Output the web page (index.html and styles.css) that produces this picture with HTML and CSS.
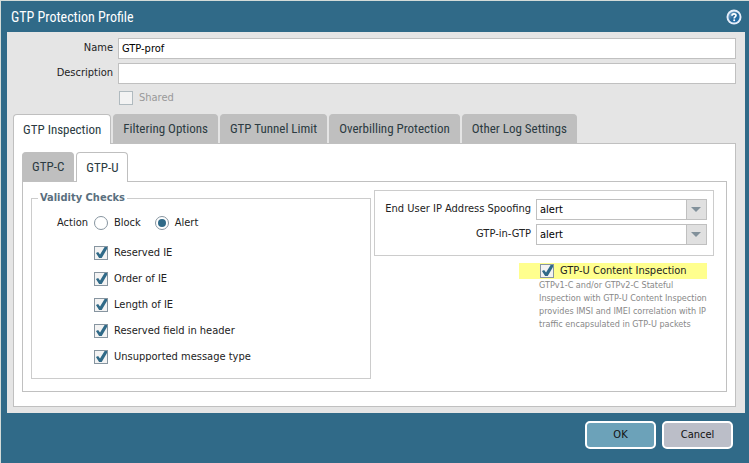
FILE: index.html
```html
<!DOCTYPE html>
<html lang="en">
<head>
  <meta charset="UTF-8" />
  <title>GTP Protection Profile</title>
  <meta name="viewport" content="width=device-width, initial-scale=1.0" />
  <link rel="stylesheet" href="styles.css">
</head>
<body>
  <form class="dialog">
    <header class="dialog-header">
      <h1>GTP Protection Profile</h1>
      <button type="button" class="help" aria-label="Help">
        <svg width="16" height="16" viewBox="0 0 16 16">
          <defs>
            <linearGradient id="help-fill" x1="0" y1="0" x2="1" y2="1">
              <stop offset="0" stop-color="#8fb8d8" />
              <stop offset="0.5" stop-color="#2a6a9c" />
              <stop offset="1" stop-color="#1c6fae" />
            </linearGradient>
          </defs>
          <circle cx="8" cy="8" r="7.5" fill="#e6eefa" />
          <circle cx="8" cy="8" r="5.6" fill="url(#help-fill)" />
          <path d="M6 6.7C6 4.4 10 4.4 10 6.5C10 8 8.2 7.8 8.2 9.4" fill="none" stroke="#fff" stroke-width="1.7" />
          <circle cx="8.2" cy="11.3" r="1" fill="#fff" />
        </svg>
      </button>
    </header>

    <main class="dialog-body">
      <div class="field">
        <label for="name">Name</label>
        <input type="text" id="name" class="text" value="GTP-prof" />
      </div>
      <div class="field">
        <label for="description">Description</label>
        <input type="text" id="description" class="text" />
      </div>
      <div class="shared">
        <label class="check"><input type="checkbox" disabled /> Shared</label>
      </div>

      <div class="tabs" role="tablist">
        <button type="button" class="tab active" role="tab" aria-selected="true">GTP Inspection</button>
        <button type="button" class="tab" role="tab">Filtering Options</button>
        <button type="button" class="tab" role="tab">GTP Tunnel Limit</button>
        <button type="button" class="tab" role="tab">Overbilling Protection</button>
        <button type="button" class="tab" role="tab">Other Log Settings</button>
      </div>

      <div class="panel">
        <div class="tabs" role="tablist">
          <button type="button" class="tab" role="tab">GTP-C</button>
          <button type="button" class="tab active" role="tab" aria-selected="true">GTP-U</button>
        </div>

        <div class="panel columns">
          <fieldset class="validity">
            <legend>Validity Checks</legend>
            <div class="action">
              <span class="action-label">Action</span>
              <label class="check"><input type="radio" name="action" /> Block</label>
              <label class="check"><input type="radio" name="action" checked /> Alert</label>
            </div>
            <div class="checks">
              <label class="check"><input type="checkbox" checked /> Reserved IE</label>
              <label class="check"><input type="checkbox" checked /> Order of IE</label>
              <label class="check"><input type="checkbox" checked /> Length of IE</label>
              <label class="check"><input type="checkbox" checked /> Reserved field in header</label>
              <label class="check"><input type="checkbox" checked /> Unsupported message type</label>
            </div>
          </fieldset>

          <div class="side">
            <div class="box">
              <div class="combo-row">
                <label for="spoofing">End User IP Address Spoofing</label>
                <div class="combo">
                  <select id="spoofing"><option>alert</option><option>block</option></select>
                </div>
              </div>
              <div class="combo-row">
                <label for="gtp-in-gtp">GTP-in-GTP</label>
                <div class="combo">
                  <select id="gtp-in-gtp"><option>alert</option><option>block</option></select>
                </div>
              </div>
            </div>
            <div class="inspection">
              <label class="check highlight"><input type="checkbox" checked /> GTP-U Content Inspection</label>
              <p class="hint">GTPv1-C and/or GTPv2-C Stateful Inspection with GTP-U Content Inspection provides IMSI and IMEI correlation with IP traffic encapsulated in GTP-U packets</p>
            </div>
          </div>
        </div>
      </div>
    </main>

    <footer class="dialog-footer">
      <button type="button" class="btn ok">OK</button>
      <button type="button" class="btn">Cancel</button>
    </footer>
  </form>
</body>
</html>
```
FILE: styles.css
```css
:root {
  --blue: #306a88;
  --gray: #e5e5e5;
  --tab: #bfbfbf;
  --line: #c0c0c0;
  --text: #222;
  --ui: "DejaVu Sans Condensed", "Noto Sans", sans-serif;
  --narrow: "Roboto Condensed", "Liberation Sans Narrow", "Liberation Sans", sans-serif;
}

* {
  box-sizing: border-box;
  margin: 0;
  padding: 0;
}

body {
  background: #d3dbd8;
  padding: 1px 0 0 1px;
  font: 11px/16px var(--ui);
  color: var(--text);
}

button, input, select {
  font: inherit;
  color: inherit;
}

.dialog {
  min-height: calc(100vh - 1px);
  background: var(--blue);
  padding: 0 4px 0 6px;
}

.dialog-header {
  height: 31px;
  display: flex;
  align-items: center;
  justify-content: space-between;
  padding: 0 3px 0 4px;
}

.dialog-header h1 {
  font: 14px/20px var(--narrow);
  color: #fff;
}

.help {
  display: flex;
  border: 0;
  background: none;
}

.dialog-body {
  background: var(--gray);
  padding: 6px 9px 6px 6px;
}

.field {
  display: flex;
  margin-bottom: 4px;
}

.field label {
  width: 100px;
  margin-right: 5px;
  line-height: 20px;
  text-align: right;
}

.text {
  flex: 1;
  height: 21px;
  border: 1px solid var(--line);
  background: #fff;
  padding: 0 3px;
  color: #000;
}

.shared {
  margin: 6px 0 8px 106px;
  color: #999;
}

.check {
  display: flex;
  align-items: center;
  gap: 6px;
}

.check input {
  appearance: none;
  width: 14px;
  height: 14px;
  border: 1px solid #8795a0;
  background: #f3f3f3;
}

.check input:disabled {
  border-color: #b0babf;
}

.check input[type="radio"] {
  border-radius: 50%;
  background: #fff;
  padding: 2px;
}

.check input:checked::before {
  content: "";
  display: block;
  width: 12px;
  height: 12px;
  background: var(--blue);
  clip-path: polygon(8% 50%, 26% 42%, 42% 62%, 80% 0, 100% 0, 100% 16%, 56% 92%, 34% 92%);
}

.check input[type="radio"]:checked::before {
  width: 8px;
  height: 8px;
  border-radius: 50%;
  clip-path: none;
}

.tabs {
  display: flex;
  gap: 2px;
}

.tab {
  height: 29px;
  padding: 0 9px;
  border: 1px solid var(--tab);
  border-bottom: 0;
  border-radius: 4px 4px 0 0;
  background: var(--tab);
  font: 13px/20px var(--narrow);
  color: #2c3b42;
}

.tab.active {
  background: #fff;
  height: 30px;
  margin-bottom: -1px;
  z-index: 1;
}

.panel {
  background: #fff;
  border: 1px solid var(--line);
  padding: 8px 8px 14px;
}

.columns {
  display: grid;
  grid-template-columns: 1fr 1fr;
  gap: 3px;
  padding: 8px 12px 12px 8px;
}

.validity {
  min-width: 0;
  border: 1px solid #ccc;
  padding: 0 6px 13px;
}

.validity legend {
  padding: 0 2px;
  line-height: 16px;
  font-weight: bold;
  color: #5a6f7e;
}

.action {
  display: flex;
  align-items: center;
  height: 16px;
  margin: 9px 0 14px;
}

.action-label {
  width: 50px;
  margin-right: 6px;
  text-align: right;
}

.action .check + .check {
  margin-left: 14px;
}

.checks {
  display: grid;
  gap: 10px;
  padding-left: 56px;
}

.side {
  min-width: 0;
}

.box {
  border: 1px solid #ccc;
  padding: 8px 6px 10px;
  display: grid;
  gap: 4px;
}

.combo-row {
  display: flex;
  justify-content: flex-end;
}

.combo-row label {
  margin-right: 5px;
  line-height: 20px;
  white-space: nowrap;
}

.combo {
  display: flex;
  position: relative;
  width: 171px;
}

.combo select {
  appearance: none;
  width: 100%;
  height: 21px;
  border: 1px solid var(--line);
  background: linear-gradient(to left, #e0e0e0 19px, var(--line) 19px, var(--line) 20px, #fff 20px);
  padding: 0 3px;
  color: #000;
}

.combo::after {
  content: "";
  position: absolute;
  right: 6px;
  top: 8px;
  border: 5px solid transparent;
  border-top-color: #82919b;
  border-bottom: 0;
  pointer-events: none;
}

.inspection {
  margin: 7px 7px 0 145px;
}

.highlight {
  background: #ffff8e;
  padding-left: 21px;
}

.hint {
  margin: 0 -6px 0 20px;
  font-size: 9px;
  line-height: 13px;
  color: #888;
}

.dialog-footer {
  display: flex;
  justify-content: flex-end;
  gap: 6px;
  padding: 8px 12px 14px;
}

.btn {
  width: 71px;
  height: 28px;
  border: 2px solid #fff;
  border-radius: 5px;
  background: #bbbec8;
  color: #111;
}

.btn.ok {
  background: #6ca2b9;
}
```
